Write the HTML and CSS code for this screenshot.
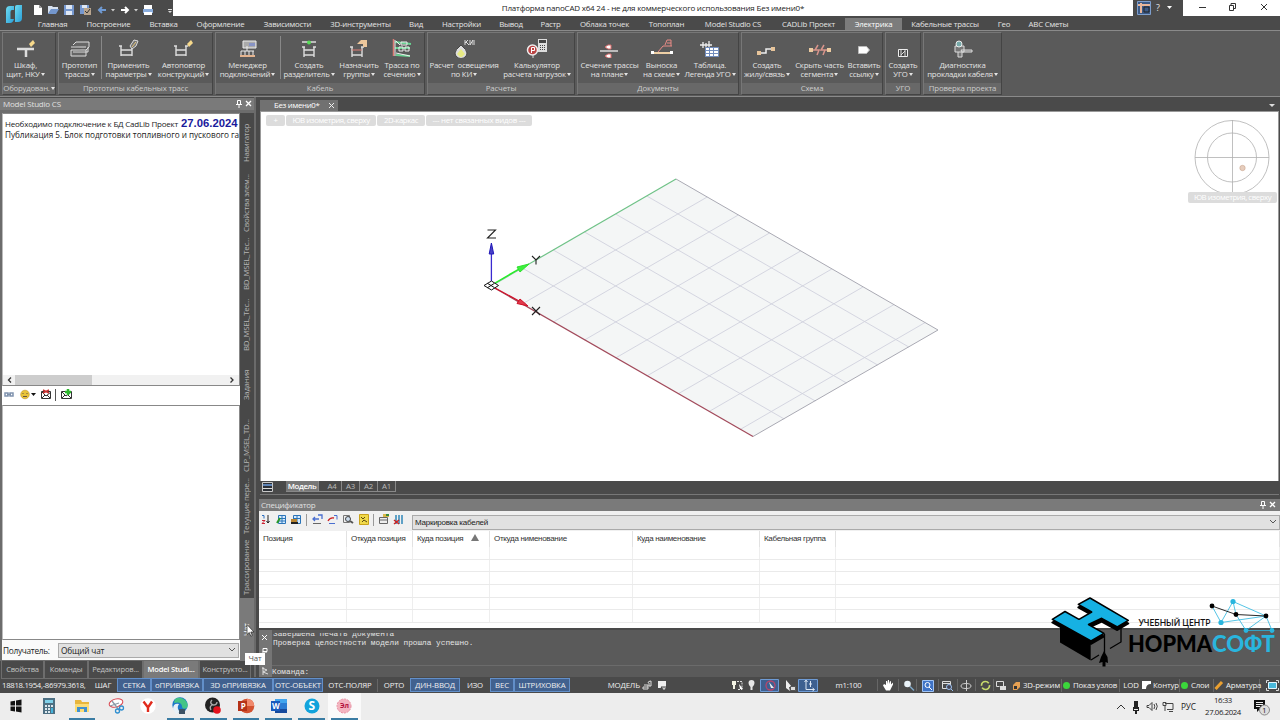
FILE: index.html
```html
<!DOCTYPE html>
<html lang="ru">
<head>
    <meta charset="UTF-8">
    <title>Платформа nanoCAD x64 24</title>
    <link rel="stylesheet" href="styles.css">
</head>
<body>
<div class="app">
    <svg class="app-logo" width="18" height="20" viewBox="0 0 18 20">
        <defs><linearGradient id="lg" x1="0" y1="0" x2="1" y2="1"><stop offset="0" stop-color="#6fdcf0"/><stop offset="1" stop-color="#2a9fd8"/></linearGradient></defs>
        <path fill="url(#lg)" d="M5 1h4v4H7q-1.500 0-1.500 2v7H9q-1 4-4 4H1V5q0-4 4-4z"/>
        <path fill="url(#lg)" d="M12 0h5v13q0 4-4 4h-3V2q0-2 2-2z"/>
        <path fill="#4a4a4a" d="M6.500 8q0-1.500 2.500-1.500V13H6.500z"/>
    </svg>

    <header class="titlebar">
        <div class="quick">
            <svg width="140" height="16" viewBox="33 0 140 16">
                <path fill="#fff" d="M34 5h5l3 3v7h-8z"/><path fill="#999" d="M39 5v3h3z"/>
                <path fill="#d8e2f0" d="M48 6h4l1 1h5v3h-7l-3 4z"/><path fill="#7396cc" d="M51 9h8l-3 5h-8z"/>
                <path fill="#7698cf" d="M64 5h10v10H64z"/><path fill="#dfe8f4" d="M66 5h6v4h-6zM66 11h6v4h-6z"/>
                <path fill="#7698cf" d="M80 5h9v9h-9z"/><path fill="#dfe8f4" d="M82 5h5v3h-5z"/><path fill="#b9a58e" d="M84 8h7v7h-7z"/><path stroke="#333" fill="none" d="M85 11l2 2 3-4"/>
                <path stroke="#6f9ad3" stroke-width="2" fill="none" d="M99 10h7M102 7l-3 3 3 3"/>
                <path fill="#ccc" d="M111 9h4l-2 2.500zM134 9h4l-2 2.500z"/>
                <path stroke="#fff" stroke-width="2" fill="none" d="M121 10h7M125 7l3 3-3 3"/>
                <path fill="#fff" d="M144 5h8v4h-8z"/><path fill="#8aaddd" d="M143 9h10v4h-10z"/><path fill="#fff" d="M144 12h8v3h-8z"/>
                <path fill="#ddd" d="M168 9h4v1h-4zM168 11h4l-2 2z"/>
            </svg>
        </div>
        <div class="title">Платформа nanoCAD x64 24 - не для коммерческого использования Без имени0*</div>
        <div class="title-help">
            <svg width="50" height="16"><path fill="#3c5a86" stroke="#7e9fcd" d="M4.500 1.500h13v13h-13z"/><path stroke="#e9b79a" stroke-width="2" fill="none" d="M5 5h12M8 3v10"/><path stroke="#222" fill="none" d="M11 7h5v5h-5z"/><path fill="#fff" d="M34 6h5l-2.500 3z"/></svg>
            <span class="question">?</span>
        </div>
        <svg class="window-buttons" width="97" height="16" stroke="#333" fill="none">
            <path d="M16 7.500h7M46.500 5.500h4v5h-4zM48 5V3.500h4.500v5H51M78 4l6 6M84 4l-6 6"/>
        </svg>
    </header>

    <nav class="menu">
        <span>Главная</span><span>Построение</span><span>Вставка</span><span>Оформление</span><span>Зависимости</span><span>3D-инструменты</span><span>Вид</span><span>Настройки</span><span>Вывод</span><span>Растр</span><span>Облака точек</span><span>Топоплан</span><span>Model Studio CS</span><span>CADLib Проект</span><span class="active">Электрика</span><span>Кабельные трассы</span><span>Гео</span><span>АВС Сметы</span>
    </nav>

    <section class="ribbon">
        <div class="group g-equip">
            <div class="tools">
                <button><svg class="ico" viewBox="0 0 22 20"><path stroke="#ddd" stroke-width="2.500" fill="none" d="M2 11h17M11 11v8"/><path fill="#f7d98b" d="M14 6l4-4 2 3-4 4z"/></svg>Шкаф,<br>щит, НКУ<i></i></button>
            </div>
            <div class="caption">Оборудован.<i></i></div>
        </div>
        <div class="group g-proto">
            <div class="tools">
                <button><svg class="ico" viewBox="0 0 22 20"><path fill="#666" stroke="#ddd" d="M4 7l3-3h13v5l-3 3M2 9h15M2 12h15v6H2zM4 14h15v-5"/></svg>Прототип<br>трассы<i></i></button>
                <button class="split"><svg class="ico" viewBox="0 0 22 20"><path stroke="#ddd" stroke-width="1.400" fill="none" d="M3 8v10M14 8v10M3 12h11M3 17h11M1 8h3M13 8h3"/><path stroke="#ddd" fill="#777" d="M12 8l4-6 4 1-2 5-4 3z"/><path stroke="#e8c87c" d="M14 9l4-5"/></svg>Применить<br>параметры<i></i></button>
                <button><svg class="ico" viewBox="0 0 22 20"><path stroke="#ddd" stroke-width="1.400" fill="none" d="M3 8v10M13 8v10M3 12h10M3 17h10M1 8h3M12 8h3"/><path fill="#f7d98b" d="M14 6l4-4 2 3-4 4z"/></svg>Автоповтор<br>конструкций<i></i></button>
            </div>
            <div class="caption">Прототипы кабельных трасс</div>
        </div>
        <div class="group g-cable">
            <div class="tools">
                <button><svg class="ico" viewBox="0 0 22 20"><path fill="#aaa" stroke="#eee" d="M6 3h13v7H6z"/><path fill="#8793c5" d="M12 5h6v3h-6z"/><path stroke="#eee" fill="none" d="M10 8v5M4 13h13M4 13v5M8 13v5M12 13v5M16 13v5"/><path stroke="#e5b48f" stroke-width="2" d="M3 18h15"/></svg>Менеджер<br>подключений<i></i></button>
                <button class="split"><svg class="ico" viewBox="0 0 22 20"><path stroke="#ddd" stroke-width="1.400" fill="none" d="M6 9v10M16 9v10M6 12h10M6 17h10M4 9h3M15 9h3M4 4h14"/><circle cx="11" cy="4.500" r="2" fill="#5d5"/></svg>Создать<br>разделитель<i></i></button>
                <button><svg class="ico" viewBox="0 0 22 20"><path stroke="#ddd" stroke-width="1.400" fill="none" d="M4 9v10M14 9v10M4 17h10M2 9h3M13 9h3"/><path stroke="#dc7c74" d="M4 12h10"/><path fill="#edc79c" d="M9 6l4-4h6v7h-4v-3z"/></svg>Назначить<br>группы<i></i></button>
                <button><svg class="ico" viewBox="0 0 22 20"><path stroke="#dc7c74" stroke-width="1.500" d="M2.500 1v17"/><path stroke="#67d391" stroke-width="2" fill="none" d="M4 4l16 2M4 10h15M5 17l14 1"/><path stroke="#eee" fill="none" d="M4 2v16M5 3l4 4M5 15l14 3M8 9h4v4H8zM14 9h4v4h-4zM10 4h6v3h-6z"/></svg>Трасса по<br>сечению<i></i></button>
            </div>
            <div class="caption">Кабель</div>
        </div>
        <div class="group g-calc">
            <div class="tools">
                <button><svg class="ico" viewBox="0 0 22 20"><path fill="#ddd" stroke="#444" d="M8 7q-6 5-6 8a6 5.500 0 0 0 12 0q0-3-6-8z"/><path fill="#e7ea83" d="M8 11l4 5-3 3H7l-3-3z"/><path stroke="#ddd" fill="none" d="M12 2v5M12 5l3-3M13 4l3 3M17 2v5l3-5v5M22 2v5"/></svg>Расчет&nbsp; освещения<br>по КИ<i></i></button>
                <button><svg class="ico" viewBox="0 0 22 20"><circle cx="6.500" cy="12" r="5" fill="#b44" stroke="#eee" stroke-width="1.500"/><path stroke="#ddd" d="M7 17v3"/><path stroke="#fff" fill="none" d="M5.500 15V9.500h3v3h-3"/><path fill="#ddd" d="M12 1h9v13h-9z"/><path fill="#444" d="M13 2h7v3h-7zM14 7h1v1h-1zM16 7h1v1h-1zM18 7h1v1h-1zM14 9h1v1h-1zM16 9h1v1h-1zM18 9h1v1h-1zM14 11h1v1h-1zM16 11h1v1h-1zM18 11h1v1h-1z"/></svg>Калькулятор<br>расчета нагрузок<i></i></button>
            </div>
            <div class="caption">Расчеты</div>
        </div>
        <div class="group g-docs">
            <div class="tools">
                <button><svg class="ico" viewBox="0 0 22 20"><path stroke="#bbb" stroke-width="2" d="M1 13h18"/><path fill="#fff" stroke="#d96d6d" d="M6 9l3-2h3v4H9zM6 18l3-2h3v4H9z"/></svg>Сечение трассы<br>на плане<i></i></button>
                <button><svg class="ico" viewBox="0 0 22 20"><path stroke="#edcfa5" stroke-width="2" d="M1 15h20"/><path stroke="#e98b86" fill="none" d="M7 14l5-6h9M14 7l2-5h4v6M16 5h4"/><path fill="#fff" d="M0 13h3v3H0zM19 13h3v3h-3z"/></svg>Выноска<br>на схеме<i></i></button>
                <button><svg class="ico" viewBox="0 0 22 20"><path stroke="#eee" stroke-width="1.300" fill="none" d="M1 7h12M4 4v6M10 3v7M7 5v4"/><path fill="#fff" stroke="#728dbd" d="M6.500 9.500h13v9h-13zM6 12.500h13M6 15.500h13M10.500 10v8M14.500 10v8"/></svg>Таблица.<br>Легенда УГО<i></i></button>
            </div>
            <div class="caption">Документы</div>
        </div>
        <div class="group g-scheme">
            <div class="tools">
                <button><svg class="ico" viewBox="0 0 22 20"><path stroke="#eee" fill="none" stroke-width="1.500" d="M3 15h7v-4h8"/><path fill="#e7c49a" d="M1 13h4v4H1zM15 9h4v4h-4z"/></svg>Создать<br>жилу/связь<i></i></button>
                <button><svg class="ico" viewBox="0 0 22 20"><path stroke="#d9958c" stroke-width="1.500" fill="none" d="M2 12h6M14 12h7M9 7l-3 5h4l-2 5M15 7l-3 5h4l-2 5"/><path fill="#eccba0" d="M0 10h4v4H0zM18 10h4v4h-4z"/></svg>Скрыть часть<br>сегмента<i></i></button>
                <button><svg class="ico" viewBox="0 0 22 20"><path fill="#fff" stroke="#bbb" d="M5.500 8.500h8l3 3.500-3 3.500h-8z"/></svg>Вставить<br>ссылку<i></i></button>
            </div>
            <div class="caption">Схема</div>
        </div>
        <div class="group g-ugo">
            <div class="tools">
                <button><svg class="ico" viewBox="0 0 22 20"><path fill="#444" stroke="#eee" d="M6.500 11.500h9v7h-9z"/><path stroke="#ddd" fill="none" d="M9 12v6M13 12v6M9 17l4-4"/></svg>Создать<br>УГО<i></i></button>
            </div>
            <div class="caption">УГО</div>
        </div>
        <div class="group g-check">
            <div class="tools">
                <button><svg class="ico" viewBox="0 0 22 20"><path stroke="#ddd" fill="#777" d="M3 8h9v6H3zM6 14v5h4v-5M9 12h11v2H10z"/><circle cx="7" cy="6" r="3" fill="#7aa" stroke="#eee"/></svg>Диагностика<br>прокладки кабеля<i></i></button>
            </div>
            <div class="caption">Проверка проекта</div>
        </div>
    </section>

    <main class="workspace">
        <aside class="side">
            <div class="panel-title"><span>Model Studio CS</span>
                <svg width="18" height="10" stroke="#fff" fill="none"><path d="M2.500 1.500h3v4h-3zM1 5.500h6M4 6v3"/><path stroke-width="1.300" d="M11 2l5 5M16 2l-5 5"/></svg>
            </div>
            <div class="side-body">
                <div class="chat">
                    <div class="messages">
                        <div class="msg">Необходимо подключение к БД CadLib Проект <b>27.06.2024</b></div>
                        <div class="msg second">Публикация 5. Блок подготовки топливного и пускового га</div>
                        <div class="hscroll"><svg width="236" height="10" stroke="#333" fill="none" stroke-width="1.300"><path fill="#cdcdcd" stroke="none" d="M12 0h77v10H12z"/><path d="M8 2.500L5.500 5 8 7.500M227.500 2.500L230 5l-2.500 2.500"/></svg></div>
                    </div>
                    <div class="chat-tools">
                        <svg width="80" height="17">
                            <path stroke="#8093ae" stroke-width="1.500" fill="none" d="M3 7h3v3H3zM8 7h3v3H8zM5 8.500h4"/>
                            <circle cx="23" cy="8.500" r="4.300" fill="#e8c33a" stroke="#c29622" stroke-width=".6"/><path stroke="#654" fill="none" d="M21 7v1M25 7v1M21 10.500h4"/>
                            <path fill="#111" d="M29 7h5l-2.500 3z"/>
                            <path fill="#fff" stroke="#333" d="M39.500 5.500h9v7h-9zM40 6l4 4 5-4M40 12l3-3M48 12l-3-3"/><path stroke="#c33" stroke-width="1.400" d="M41 4l6 3M47 4l-6 3"/>
                            <path stroke="#555" d="M53.500 3v12"/>
                            <path fill="#fff" stroke="#333" d="M59.500 5.500h10v7h-10zM60 6l4 4 5-4M60 12l3-3M69 12l-3-3"/><path stroke="#2db82d" stroke-width="2.500" d="M66 3v6M63 6h6"/>
                        </svg>
                    </div>
                    <div class="compose"></div>
                    <div class="receiver"><span>Получатель:</span><div class="select">Общий чат<svg width="8" height="6" stroke="#555" fill="none"><path d="M1 1l3 3 3-3"/></svg></div></div>
                </div>
                <div class="vtabs">
                    <span>Навигатор</span><span>Свойства элем...</span><span>BD_MSEL_Тес...</span><span>BD_MSEL_Тес...</span><span>Задания</span><span>CLP_MSEL_TD...</span><span>Текущие пере...</span><span>Трассирование</span><span class="active">Чат</span>
                </div>
            </div>
            <div class="side-tabs">
                <span>Свойства</span><span>Команды</span><span>Редактиров...</span><span class="active">Model Studi...</span><span>Конструкто...</span>
            </div>
        </aside>

        <section class="content">
            <div class="doc-tabs"><div class="doc-tab">Без имени0*<svg width="7" height="7" stroke="#eee"><path d="M1 1l5 5M6 1L1 6"/></svg></div><i></i></div>
            <div class="viewport">
                <svg class="drawing" width="1017" height="369" viewBox="261 112 1017 369">
                    <path fill="#f4f6f6" d="M491 286L676 179 938 330 753 436.500z"/>
                    <g stroke="#d0d1de" stroke-width=".9">
                        <path d="M522.200 304l185-107M553.300 322l185-107M584.500 340l185-107M615.600 358l185-107M646.800 376l185-107M677.900 394l185-107M709.100 411.500l185-107M740.200 429.500l185-107"/>
                        <path d="M522.200 268l262 151M553.300 250l262 151M584.500 232l262 151M615.600 214l262 151M646.800 196l262 151"/>
                    </g>
                    <path stroke="#a9a9b3" fill="none" d="M676 179L938 330 753 436.500"/>
                    <path stroke="#6fc287" stroke-width="1.200" d="M491 286L676 179"/>
                    <path stroke="#a24a5b" stroke-width="1.200" d="M491 286L753 436.500"/>
                    <path stroke="#22f022" stroke-width="1.400" d="M495 283l24-14"/><path fill="#3df03d" stroke="#2de02d" d="M529 264l-12 3 3 5z"/>
                    <path stroke="#d01028" stroke-width="1.300" d="M495 288l24 13"/><path fill="#e03c4c" stroke="#d01028" d="M528 306l-11-2.500 3-4.500z"/>
                    <path stroke="#3a2ad0" stroke-width="1.300" d="M491.400 281v-28"/><path fill="#4a42c8" stroke="#2018b8" d="M491.400 243l-2.200 11h4.500z"/>
                    <path stroke="#111" fill="#fff" d="M484 285.500l7.500-4.500 7 4.500-7 4.500zM487.500 283.300l7 4.400M487.500 287.700l7-4.400"/>
                    <path stroke="#222" stroke-width="1.100" fill="none" d="M487.500 230h8l-8 8h8.500M532 256l4 4 4-4M536 260v4.500M532 307l8 8M540 307l-8 8"/>
                    <g stroke="#b0b0b0" fill="none" stroke-width=".8"><circle cx="1232" cy="157.500" r="37"/><circle cx="1232" cy="157.500" r="24.500"/><path d="M1195 157.500h74M1232.500 120v74"/></g>
                    <circle cx="1242.500" cy="168" r="2.700" fill="#e6cdbd" stroke="#c9a58f" stroke-width=".6"/>
                </svg>
                <div class="chips"><span>+</span><span>ЮВ изометрия, сверху</span><span>2D-каркас</span><span>--- нет связанных видов ---</span></div>
                <div class="compass-label">ЮВ изометрия, сверху</div>
            </div>
            <div class="layout-tabs">
                <svg width="26" height="14"><path fill="#2c3036" stroke="#c8c8c8" d="M2.500 1.500h10v9h-10z"/><path stroke="#6f9fe0" stroke-width="1.500" d="M3 4h9"/><path stroke="#ddd" d="M3 7.500h9"/></svg>
                <span class="active">Модель</span><span>A4</span><span>A3</span><span>A2</span><span>A1</span>
            </div>

            <section class="spec">
                <div class="panel-title"><span>Спецификатор</span>
                    <svg width="18" height="10" stroke="#fff" fill="none"><path d="M2.500 1.500h3v4h-3zM1 5.500h6M4 6v3"/><path stroke-width="1.300" d="M11 2l5 5M16 2l-5 5"/></svg>
                </div>
                <div class="spec-tools">
                    <svg width="153" height="18" viewBox="259 512 153 18">
                        <path stroke="#2a6fc0" fill="none" d="M262 515.500h2v3"/><path stroke="#c23" fill="none" d="M262 520.500h3l-3 3h3"/><path stroke="#222" fill="none" d="M268 515v8M266.500 521l1.500 2 1.500-2"/>
                        <path fill="#d8ecff" stroke="#2b74b8" d="M278.500 515.500h7v8h-7zM278 518.500h7M278 521h7M282 516v7"/><path stroke="#2a9a2a" stroke-width="2" d="M277 523l3-5"/>
                        <path fill="#d8ecff" stroke="#2b74b8" d="M293.500 515.500h7v8h-7zM293 518.500h7M297 516v7"/><path fill="#b98431" d="M291 519h6v3h-6z"/><path fill="#222" d="M291 522h7v2h-7z"/>
                        <path stroke="#999" d="M306.500 514v12M373.500 514v12"/>
                        <path stroke="#4a6fd0" stroke-width="1.300" fill="none" d="M313 519h6M315 517l-2 2 2 2M318 515h4v4"/><path stroke="#666" d="M313 523.500h8"/>
                        <path stroke="#c22" stroke-width="1.300" fill="none" d="M328 521q2-4 6-3"/><path stroke="#4a6fd0" fill="none" d="M329 523.500h6M334 515.500h3v4"/>
                        <path stroke="#777" fill="#eee" d="M343.500 515.500h6v7h-6z"/><circle cx="348" cy="519" r="2.500" fill="#cde" stroke="#444"/><path stroke="#555" stroke-width="2" d="M350 521l3 2"/>
                        <path fill="#f0d94a" stroke="#c9a21b" d="M359.500 514.500h9v10h-9z"/><path stroke="#5a4a12" fill="none" d="M361 517l2 2 2-2M362 522l2-2 3 2"/>
                        <path fill="#eee" stroke="#666" d="M379.500 517.500h8v6h-8zM380 520h7"/><path fill="#d9b84a" d="M383 514h6v3h-6z"/><path fill="#3a8a3a" d="M386 514h3v2h-3z"/>
                        <path stroke="#2f86b8" stroke-width="1.500" d="M396 515v9M399 515v9M402 515v9"/><path stroke="#c22" stroke-width="1.500" d="M394 520l5 4M399 520l-5 4"/>
                    </svg>
                    <div class="select">Маркировка кабелей<svg width="8" height="6" stroke="#555" fill="none"><path d="M1 1l3 3 3-3"/></svg></div>
                </div>
                <div class="spec-grid">
                    <div class="spec-head"><span>Позиция</span><span>Откуда позиция</span><span>Куда позиция <i></i></span><span>Откуда нименование</span><span>Куда наименование</span><span>Кабельная группа</span><span></span></div>
                    <div class="row"><b></b><b></b><b></b><b></b><b></b><b></b><b></b></div>
                    <div class="row"><b></b><b></b><b></b><b></b><b></b><b></b><b></b></div>
                    <div class="row"><b></b><b></b><b></b><b></b><b></b><b></b><b></b></div>
                    <div class="row"><b></b><b></b><b></b><b></b><b></b><b></b><b></b></div>
                    <div class="row"><b></b><b></b><b></b><b></b><b></b><b></b><b></b></div>
                    <div class="row"><b></b><b></b><b></b><b></b><b></b><b></b><b></b></div>
                </div>
            </section>

            <section class="console">
                <div class="gutter"><svg width="13" height="46" stroke="#fff" fill="none"><path d="M3 5l5 5M8 5l-5 5M4 18.500h4v3H4zM3 22h5"/><path stroke="#ddd" d="M3 38l5 2-4 2 5 2M4 37v8"/></svg></div>
                <div class="log">
                    <div class="lines">Завершена печать документа<br>Проверка целостности модели прошла успешно.</div>
                    <div class="prompt">Команда:</div>
                </div>
            </section>
        </section>
    </main>

    <footer class="status">
        <span class="coords">18818.1954,-86979.3618,</span><span>ШАГ</span><span class="on">СЕТКА</span><span class="on">оПРИВЯЗКА</span><span class="on">3D оПРИВЯЗКА</span><span class="on">ОТС-ОБЪЕКТ</span><span class="sep">ОТС-ПОЛЯР</span><span>ОРТО</span><span class="on">ДИН-ВВОД</span><span>ИЗО</span><span class="on">ВЕС</span><span class="on">ШТРИХОВКА</span><span class="model">МОДЕЛЬ</span>
        <svg width="190" height="16" viewBox="641 677 190 16">
            <path stroke="#ddd" fill="none" d="M644 685h4v4h-5v-2h5M648 683q0-2 3-2v5h-2v-3"/><path fill="#eee" d="M658 681h8v7h-8z"/><path fill="#ccc" stroke="#444" d="M661 687l3 4 3-4z"/>
            <path fill="#f3f3e4" d="M732 681h4v4h-1v4h-2v-4h-1z"/><path stroke="#ddd" fill="none" stroke-dasharray="2 1" d="M737 681.500h5v8h-5"/><path fill="#fff" d="M739 684l4 5h-3z"/>
            <path fill="#e8e8e8" d="M748.500 683a3 3 0 0 1 6 0q0 2-2 4v3h-2v-3q-2-2-2-4z"/>
            <path fill="#3e6090" stroke="#6e9bd5" d="M760.500 679.500h18v12h-18zM798.500 679.500h19v12h-19z"/>
            <circle cx="770.500" cy="685.500" r="4.500" fill="none" stroke="#b8466a" stroke-width="1.300"/><path fill="#eee" d="M769 682l5 6h-3zM786 680l6 7h-3l1 4-4-3z"/><path fill="#ddd" stroke="#555" d="M790.500 686.500h5v4h-5z"/>
            <path stroke="#dce6f3" fill="none" d="M806 681v8.500h8M804.500 682l1.500-2 1.500 2M812.500 688l2 1.500-2 1.500M810.500 687v-6M809 684h3"/>
        </svg>
        <span>m1:100</span>
        <svg width="146" height="16" viewBox="866 677 146 16">
            <path stroke="#666" d="M877.500 679v12M898.500 679v12M916.500 679v12M938.500 679v12M957.500 679v12M975.500 679v12M993.500 679v12"/>
            <path fill="#fff" d="M884 684l2 1v-4h1v3l1-4h1v4l1-3 1 .500v3l2-2v2l-2 4-1 2h-4l-3-5z"/>
            <circle cx="907.500" cy="684" r="3.300" fill="#e9f2f8"/><path stroke="#7fa8c8" stroke-width="1.500" d="M910 686.500l4 4"/>
            <path fill="#3f73c6" stroke="#9fc3f5" d="M922.500 680.500h11v11h-11z"/><circle cx="927.500" cy="685" r="2.500" fill="none" stroke="#fff"/><path stroke="#fff" d="M929 687l3 3"/>
            <path stroke="#ddd" fill="none" d="M942.500 681.500h8v7h-8zM942 683.500h9"/><circle cx="949" cy="687" r="2.500" fill="#445" stroke="#9cc1ef"/><path stroke="#9cc1ef" d="M951 689l2 2"/>
            <ellipse cx="966" cy="686" rx="5" ry="2.500" fill="none" stroke="#ccc"/><path stroke="#ccc" d="M966.500 680v11"/>
            <circle cx="985.500" cy="685.500" r="4" fill="none" stroke="#c9dc6c" stroke-width="1.700" stroke-dasharray="10 2"/>
            <path stroke="#ddd" fill="none" d="M996.500 681.500h7v5M996.500 681.500v5h3"/><path fill="#ddd" d="M1000 686h6v4h-6z"/>
        </svg>
        <span class="tag"><svg width="9" height="10"><path fill="#e6a052" d="M1 5l3-3h4v5L5 10H1z"/><path fill="#333" d="M2 6h3v3H2z"/></svg>3D-режим</span>
        <span class="tag"><em></em>Показ узлов</span>
        <span class="lod">LOD</span>
        <span class="tag"><svg width="9" height="10"><path fill="#fff" d="M0 1h9v3q-5 0-5 5H0z"/></svg>Контур</span>
        <span class="tag"><em></em>Слои</span>
        <span class="tag"><svg width="10" height="10"><path stroke="#eaa030" stroke-width="3" d="M1.500 9L8 2"/></svg>Арматура</span>
        <svg width="20" height="16"><path fill="#49b9dc" stroke="#e3f6ff" d="M8.500 5.500h8v6h-8z"/><path stroke="#ddd" fill="none" d="M6.500 6V3.500H9M16 3.500h2.500V6M6.500 11v2.500H9M16 13.500h2.500V11"/></svg>
    </footer>

    <footer class="taskbar">
        <div class="apps">
            <span><svg class="task" viewBox="0 0 20 20"><path fill="#111" d="M4.500 5.500l4.500-.800V9.500H4.500zM10 4.500l5.500-1v6H10zM4.500 10.500H9v5l-4.500-.700zM10 10.500h5.500v6L10 15.600z"/></svg></span>
            <span><svg class="task" viewBox="0 0 20 20"><path fill="#4d6f82" d="M4 2h12v16H4z"/><path fill="#7fd1ea" d="M6 4h8v3H6z"/><path fill="#dce8ee" d="M6 9h2v2H6zM9 9h2v2H9zM12 9h2v2h-2zM6 12h2v2H6zM9 12h2v2H9zM6 15h2v2H6zM9 15h2v2H9z"/><path fill="#43b3dc" d="M12 12h2v5h-2z"/></svg></span>
            <span class="run"><svg class="task" viewBox="0 0 20 20"><path fill="#e8b63d" d="M3 4h6l1 2h7v10H3z"/><path fill="#fbdc76" d="M3 8h14v8H3z"/><path fill="#4191cf" d="M5 16v-5h10v5h-3v-3H8v3z"/></svg></span>
            <span><svg class="task" viewBox="0 0 20 20"><ellipse cx="11" cy="7" rx="7" ry="4" fill="#fff" stroke="#d9404a" transform="rotate(-15 11 7)"/><path stroke="#8a9aa8" stroke-width="1.300" d="M5 10l9-3M7 5l7 9"/><circle cx="12.500" cy="15" r="2" fill="none" stroke="#2f8fd0" stroke-width="1.300"/><circle cx="16.500" cy="12" r="2" fill="none" stroke="#2f8fd0" stroke-width="1.300"/></svg></span>
            <span><svg class="task" viewBox="0 0 20 20"><circle cx="10" cy="10" r="7.700" fill="#fff"/><path stroke="#e12b1d" stroke-width="2.400" fill="none" d="M5.500 5.500l4.500 6 4-6M10 11v5"/></svg></span>
            <span class="run"><svg class="task" viewBox="0 0 20 20"><circle cx="10" cy="9" r="7.700" fill="#1c78c8"/><path fill="#44c486" d="M5 3q5-3 10 1 4 4 2 8-5 2-5-2-1-5-8-3z"/><path fill="#e6f0f7" d="M3 13q0-6 6-5-3 4 1 8l-4 2z"/><path fill="#3d5264" d="M9 13h6v5H9z"/></svg></span>
            <span class="run"><svg class="task" viewBox="0 0 20 20"><circle cx="9.500" cy="9" r="7.500" fill="#222"/><path stroke="#aaa" stroke-width="1.400" fill="none" d="M9 4q-3 3 1 5M10 9q4 0 4-3M9 9q-3 2-1 5"/><circle cx="14" cy="14" r="3.800" fill="#e3121c"/></svg></span>
            <span class="run"><svg class="task" viewBox="0 0 20 20"><circle cx="11" cy="10" r="7.300" fill="#d35230"/><path fill="#f0896c" d="M11 2.700a7.300 7.300 0 0 1 7.300 7.300H11z"/><path fill="#b53217" d="M2 5h9v10H2z"/></svg><b>P</b></span>
            <span class="run"><svg class="task" viewBox="0 0 20 20"><path fill="#2b7cd3" d="M6 3h12v14H6z"/><path fill="#41a5ee" d="M6 3h12v4H6z"/><path fill="#174a9c" d="M6 13h12v4H6z"/><path fill="#185abd" d="M2 5h9v10H2z"/></svg><b>W</b></span>
            <span class="run"><svg class="task" viewBox="0 0 20 20"><circle cx="10" cy="10" r="7.500" fill="#11a3dc"/></svg><b class="skype">S</b></span>
            <span class="run current"><svg class="task" viewBox="0 0 20 20"><circle cx="10" cy="10" r="7" fill="#f3b4c0" stroke="#e88fa2" stroke-dasharray="2 1"/></svg><b class="en">Эл</b></span>
        </div>
        <svg width="62" height="27" viewBox="1113 693 62 27">
            <path stroke="#333" fill="none" d="M1117 709l4-4 4 4"/>
            <path fill="#222" d="M1134 701h4v8h-4zM1133 707h1v3h4v-3h1v4h-2v3h-2v-3h-2z"/>
            <path stroke="#444" fill="none" d="M1147 705.500h2l3-3v8l-3-3h-2zM1154 704q1.500 2 0 5M1156 703q2.500 3 0 7"/>
            <path stroke="#444" fill="none" d="M1165 703.500h8v6h-6M1163 702.500h3v3h-3zM1165 706v5M1169 711.500h4"/>
        </svg>
        <span class="lang">РУС</span>
        <div class="clock">16:33<br>27.06.2024</div>
        <div class="notify"><svg width="18" height="20"><path fill="#111" d="M1 3h11v9H7l-3 3v-3H1z"/><path stroke="#eee" d="M3 5.500h7M3 7.500h7M3 9.500h4"/><circle cx="11.500" cy="13" r="5" fill="#ddd" stroke="#888"/></svg><b>1</b></div>
    </footer>

    <svg class="cursor" width="10" height="13" viewBox="0 0 10 13"><path fill="#fff" stroke="#222" stroke-width=".7" d="M1 .500v10l2.300-2 1.500 3.700 1.500-.700-1.500-3.500H8z"/></svg>
    <div class="tooltip">Чат</div>

    <svg class="brand" width="236" height="80" viewBox="1046 592 236 80">
        <path fill="#000" d="M1060 625V642.500L1090.700 660.500V640z"/>
        <path fill="#5a5a5a" d="M1092 643l12-7v17l-12 7z"/>
        <path class="cap-edge" d="M1090 602L1128.300 623.500 1117.300 630 1101.700 621.500 1088.500 627.500 1104 636.500 1091 644 1052.300 622.500 1065 615 1079 622.500 1091.700 615 1078.300 607.500z"/>
        <path class="cap-edge cap-top" d="M1090 598L1128.300 620.300 1117.300 627 1101.700 618.300 1088.500 624.500 1104 633.300 1091 641 1052.300 619.300 1065 611.500 1079 619.300 1091.700 612 1078.300 604.300z"/>
        <path stroke="#000" stroke-width="1.300" fill="none" d="M1104.500 634v19M1121 627v15l-11 6.500M1091 660l8-5"/>
        <path fill="#000" d="M1104 651l3.500 6 .5 6-2.500-1v4.500h-3V662l-3.500 1 2-6z"/>
        <g stroke="#29b5de" fill="none" stroke-width=".8"><path d="M1212 606L1221 622.500 1233 601.500 1266 616 1221 622.500M1233 601.500L1236 614.500 1246 630.500H1272L1266 616 1246 630.500"/></g>
        <path stroke="#111" stroke-width=".9" fill="none" d="M1212 606l24 8.500 30 1.500"/>
        <g fill="#29b5de"><circle cx="1233" cy="601.500" r="2.600"/><circle cx="1221" cy="622.500" r="2.600"/><circle cx="1246" cy="630.500" r="2.400"/><circle cx="1272" cy="630.500" r="2.400"/></g>
        <g fill="#000"><circle cx="1212" cy="606" r="2.400"/><circle cx="1236" cy="614.500" r="2.400"/><circle cx="1266" cy="616" r="2.400"/></g>
        <text class="brand-small" x="1138.500" y="626" textLength="72" lengthAdjust="spacingAndGlyphs">УЧЕБНЫЙ ЦЕНТР</text>
        <text class="brand-big" x="1128" y="651.500" textLength="84" lengthAdjust="spacingAndGlyphs">НОРМА</text>
        <text class="brand-big blue" x="1212" y="651.500" textLength="63" lengthAdjust="spacingAndGlyphs">СОФТ</text>
    </svg>
</div>
</body>
</html>
```
FILE: styles.css
```css
* {
    box-sizing: border-box;
}
body {
    margin: 0;
    font-family: "Open Sans", "Noto Sans", sans-serif;
    font-size: 7.8px;
    letter-spacing: -0.2px;
    color: #e4e4e4;
}
svg {
    display: block;
    flex: none;
}
.app {
    position: relative;
    width: 1280px;
    height: 720px;
    overflow: hidden;
    display: flex;
    flex-direction: column;
    background: #4a4a4a;
    white-space: nowrap;
}
.app-logo {
    position: absolute;
    left: 5px;
    top: 5px;
}

/* title bar */
.titlebar {
    display: flex;
    height: 16px;
    background: #fff;
}
.quick {
    width: 173px;
    padding-left: 33px;
    background: #4a4a4a;
}
.title {
    width: 960px;
    text-align: center;
    color: #222;
    font-size: 8px;
    line-height: 15px;
}
.title-help {
    position: relative;
    width: 50px;
    background: #4a4a4a;
}
.question {
    position: absolute;
    left: 23px;
    top: 2px;
    font-size: 9px;
    line-height: 12px;
}
.menu {
    display: grid;
    grid-template-columns: 49px 63px 47px 67px 67px 79px 32px 59px 40px 39px 69px 55px 78px 73px 57px 86px 32px 57px;
    height: 15px;
    padding: 2px 0 0 28px;
    line-height: 12px;
    text-align: center;
    border-bottom: 1px solid #8a8a8a;
}
.menu .active {
    background: #7c7c7c;
    color: #fff;
}

/* ribbon */
.ribbon {
    display: flex;
    gap: 2px;
    height: 66px;
    padding: 1px 2px;
    background: #5a5a5a;
    border-bottom: 1px solid #8a8a8a;
}
.group {
    display: flex;
    flex-direction: column;
    border: 1px solid #444;
    border-top-color: #777;
    border-left-color: #777;
}
.tools {
    display: grid;
    align-items: start;
    height: 51px;
    margin: 0 -1px;
}
.tools button {
    display: block;
    height: 46px;
    padding: 4px 0 0;
    border: 0;
    background: none;
    color: #e4e4e4;
    font: inherit;
    letter-spacing: inherit;
    line-height: 9px;
    text-align: center;
    white-space: nowrap;
}
.tools .split {
    background: linear-gradient(#888, #888) left 3px / 1px 43px no-repeat;
}
.tools button, .caption {
    min-width: 0;
}
.ico {
    width: 22px;
    height: 20px;
    margin: 0 auto 3px;
}
.group i {
    display: inline-block;
    margin-left: 1px;
    border: 2px solid transparent;
    border-top: 3px solid #e4e4e4;
    border-bottom: 0;
    vertical-align: 1px;
}
.caption {
    height: 11px;
    background: #686868;
    color: #ccc;
    line-height: 10px;
    text-align: center;
    letter-spacing: -0.15px;
}
.g-equip { width: 54px; }
.g-equip .tools { grid-template-columns: 47px; }
.g-equip .caption { letter-spacing: -0.25px; }
.g-proto { width: 155px; }
.g-proto .tools { grid-template-columns: 43px 55px 55px; }
.g-cable { width: 210px; }
.g-cable .tools { grid-template-columns: 65px 58px 42px 44px; }
.g-calc { width: 148px; }
.g-calc .tools { grid-template-columns: 74px 72px; }
.g-docs { width: 162px; }
.g-docs .tools { grid-template-columns: 65px 39px 58px; }
.g-scheme { width: 142px; }
.g-scheme .tools { grid-template-columns: 52px 53px 36px; }
.g-ugo { width: 36px; }
.g-check { width: 79px; }

/* left panel */
.workspace {
    display: flex;
    height: 580px;
}
.side {
    width: 256px;
    padding-top: 1px;
    border-right: 2px solid #6a6a6a;
    background: #4a4a4a;
}
.panel-title {
    display: flex;
    justify-content: space-between;
    align-items: center;
    height: 12px;
    padding: 0 1px 0 3px;
    background: #7a7a7a;
    color: #e0e0e0;
    font-size: 8px;
    line-height: 12px;
}
.side-body {
    display: flex;
    height: 551px;
    background: #6c6c6c;
    padding: 3px 0 1px 2px;
}
.chat {
    display: flex;
    flex-direction: column;
    width: 238px;
    background: #fff;
    color: #222;
}
.messages {
    position: relative;
    height: 273px;
    padding: 3px 0 0 2px;
    overflow: hidden;
    border: 1px solid #888;
    border-left-color: #bbb;
}
.msg {
    height: 12px;
    line-height: 12px;
    font-size: 8px;
    letter-spacing: -0.2px;
}
.msg b {
    margin-left: 1px;
    color: #1a1a9c;
    font: bold 11.3px/12px "Liberation Sans", sans-serif;
    letter-spacing: 0;
}
.msg.second {
    font-size: 8.2px;
    letter-spacing: -0.03px;
}
.hscroll {
    position: absolute;
    left: 0;
    bottom: 0;
    background: #f1f1f1;
}
.chat-tools {
    height: 20px;
}
.compose {
    height: 235px;
    border: 1px solid #888;
    border-left-color: #bbb;
}
.receiver {
    display: flex;
    align-items: center;
    height: 20px;
    padding: 0 1px;
    background: #fafafa;
    font-size: 8.3px;
}
.receiver span {
    width: 55px;
    letter-spacing: -0.3px;
}
.select {
    display: flex;
    justify-content: space-between;
    align-items: center;
    flex: 1;
    height: 15px;
    padding: 0 2px;
    border: 1px solid #aaa;
    background: #e1e1e1;
    color: #222;
}
.vtabs {
    display: grid;
    grid-template-rows: 59px 62px 60px 61px 60px 62px 59px 62px 63px;
    width: 14px;
    background: #484848;
}
.vtabs span {
    display: block;
    writing-mode: vertical-rl;
    transform: rotate(180deg);
    width: 14px;
    line-height: 12px;
    color: #b4b4b4;
    text-align: center;
    font-size: 7.9px;
    letter-spacing: -0.3px;
}
.vtabs .active {
    background: #7a7a7a;
    color: #fff;
}
.side-tabs {
    display: grid;
    grid-template-columns: 43px 44px 55px 56px 52px;
    margin-left: 1px;
    height: 15px;
    text-align: center;
    color: #c4c4c4;
    font-size: 7.6px;
}
.side-tabs span {
    border: 1px solid #6d6d6d;
    border-top: 0;
    line-height: 17px;
}
.side-tabs .active {
    background: #7a7a7a;
    color: #fff;
    font-weight: 600;
}

/* document area */
.content {
    display: flex;
    flex-direction: column;
    width: 1024px;
    padding: 2px 0 0 3px;
}
.doc-tabs {
    display: flex;
    justify-content: space-between;
    align-items: center;
    height: 12px;
    padding-right: 5px;
}
.doc-tab {
    display: flex;
    align-items: center;
    justify-content: space-between;
    width: 78px;
    height: 11px;
    margin-left: 1px;
    padding: 0 3px 0 14px;
    background: #717171;
    color: #fff;
    letter-spacing: -0.28px;
}
.doc-tabs i {
    border: 3px solid transparent;
    border-top-color: #ddd;
    border-bottom: 0;
}
.viewport {
    position: relative;
    height: 370px;
    width: 1019px;
    margin-left: 1px;
    border: 1px solid #999;
    border-bottom: 0;
    background: #fff;
}
.chips {
    position: absolute;
    left: 5px;
    top: 3px;
    display: grid;
    grid-template-columns: 19px 90px 48px 106px;
    gap: 1px;
    text-align: center;
}
.chips span, .compass-label {
    height: 11px;
    border-radius: 2px;
    background: #dcdcdc;
    color: #fff;
    line-height: 10px;
    text-align: center;
    font-size: 7.8px;
    letter-spacing: -0.43px;
}
.chips span:last-child {
    letter-spacing: -0.25px;
}
.compass-label {
    position: absolute;
    right: 1px;
    top: 80px;
    width: 89px;
}
.layout-tabs {
    display: flex;
    height: 14px;
    width: 1019px;
    margin-left: 1px;
    padding-bottom: 2px;
    border-bottom: 1px solid #777;
    line-height: 11px;
}
.layout-tabs span {
    width: 18px;
    border-right: 1px solid #888;
    border-bottom: 1px solid #888;
    text-align: center;
    color: #bbb;
}
.layout-tabs .active {
    width: 33px;
    background: #777;
    color: #fff;
    font-weight: 600;
    letter-spacing: -0.35px;
}
.layout-tabs .active + span {
    width: 23px;
    padding-left: 4px;
}
.spec {
    height: 129px;
    margin-top: 4px;
    background: #fff;
    color: #333;
    font-family: "Liberation Sans", sans-serif;
    font-size: 8px;
    letter-spacing: -0.25px;
}
.spec .panel-title {
    font-family: "Open Sans", sans-serif;
    padding: 0 3px 0 2px;
}
.spec-tools {
    display: flex;
    align-items: center;
    height: 20px;
    background: #f0f0f0;
}
.spec-tools .select {
    margin-top: 2px;
}
.spec-head, .row {
    display: grid;
    grid-template-columns: 88px 66px 77px 143px 127px 76px 1fr;
    height: 12.7px;
    border-bottom: 1px solid #eaeaea;
}
.row b {
    border-right: 1px solid #eee;
}
.spec-head {
    height: 16px;
    line-height: 16px;
    border: 0;
    letter-spacing: -0.3px;
}
.spec-head span {
    padding-left: 4px;
    border-right: 1px solid #e2e2e2;
}
.spec-head i {
    display: inline-block;
    margin-left: 6px;
    border: 4px solid transparent;
    border-bottom: 7px solid #777;
    border-top: 0;
}
.console {
    display: flex;
    height: 47px;
    margin-top: 2px;
    background: #5a5a5a;
}
.gutter {
    width: 13px;
    background: #757575;
}
.log {
    flex: 1;
    font: 7.78px/9px "Liberation Mono", monospace;
    letter-spacing: 0;
}
.lines {
    height: 33px;
    margin-top: 3px;
    overflow: hidden;
    border-bottom: 1px solid #6b6b6b;
    padding-left: 1px;
}
/* the upper line is scrolled partly out of the log */
.lines::before {
    content: "";
    display: block;
    margin-top: -3px;
}
.prompt {
    line-height: 12px;
}

/* status bar */
.status {
    display: grid;
    grid-template-columns: 89px 28px 34px 52px 70px 50px 55px 32px 50px 30px 24px 56px 71px 190px 35px 146px 50px 58px 22px 38px 34px 46px 20px;
    align-items: center;
    height: 16px;
    line-height: 13px;
    text-align: center;
    font-size: 7.8px;
    letter-spacing: -0.15px;
    color: #f0f0f0;
}
.status .coords {
    text-align: left;
    padding-left: 2px;
    letter-spacing: -0.32px;
}
.status .on {
    height: 14px;
    background: #41618f;
    border: 1px solid #628fc9;
    line-height: 12px;
}
.status .sep {
    border-right: 1px solid #666;
}
.status .model {
    text-align: right;
    padding-right: 1px;
}
.tag {
    display: flex;
    align-items: center;
    gap: 2px;
    border-right: 1px solid #666;
}
.tag em {
    width: 7px;
    height: 7px;
    margin: 0 1px;
    border-radius: 50%;
    background: #3bd63b;
}

/* task bar */
.taskbar {
    display: flex;
    height: 27px;
    background: #ededed;
    color: #222;
}
.apps {
    display: grid;
    grid-template-columns: repeat(11, 32.8px);
    width: 1113px;
}
.apps span {
    position: relative;
    display: flex;
    justify-content: center;
    padding-top: 3px;
}
.task {
    width: 20px;
    height: 20px;
}
.run::after {
    content: "";
    position: absolute;
    left: 3px;
    right: 3px;
    bottom: 0;
    height: 2px;
    background: #3a7ca3;
}
.apps .current {
    background: #fafafa;
}
.apps b {
    position: absolute;
    left: 9px;
    top: 8px;
    width: 9px;
    color: #fff;
    font-size: 8px;
    line-height: 10px;
    text-align: center;
}
.apps .skype {
    left: 12px;
    font-size: 12px;
}
.apps .en {
    left: 11px;
    width: 11px;
    color: #b3123c;
    font-size: 7px;
}
.lang {
    width: 26px;
    padding-left: 6px;
    line-height: 27px;
    font-size: 8.3px;
}
.clock {
    width: 44px;
    padding-top: 2px;
    text-align: center;
    font-size: 7.8px;
    letter-spacing: -0.4px;
    line-height: 11.5px;
    margin: 0 8px 0 0;
}
.notify {
    position: relative;
    padding: 4px 0 0 0;
    margin-right: 6px;
}
.notify b {
    position: absolute;
    left: 9px;
    top: 12px;
    font: 8px/10px "Open Sans", sans-serif;
}

/* overlays */
.cursor {
    position: absolute;
    left: 246px;
    top: 624px;
}
.tooltip {
    position: absolute;
    left: 245px;
    top: 653px;
    width: 20px;
    height: 12px;
    background: #fff;
    color: #555;
    line-height: 11px;
    text-align: center;
}
.brand {
    position: absolute;
    left: 1046px;
    top: 592px;
    letter-spacing: 0;
}
.cap-edge {
    fill: #000;
    stroke: #000;
    stroke-width: 2px;
    stroke-linejoin: round;
}
.cap-top {
    fill: #16b1e3;
    stroke-width: 1.5px;
}
.brand-small {
    font: 600 9.5px Lato, sans-serif;
    fill: #111;
}
.brand-big {
    font: 900 22px Lato, sans-serif;
    fill: #000;
}
.blue {
    fill: #29b5de;
}
```
